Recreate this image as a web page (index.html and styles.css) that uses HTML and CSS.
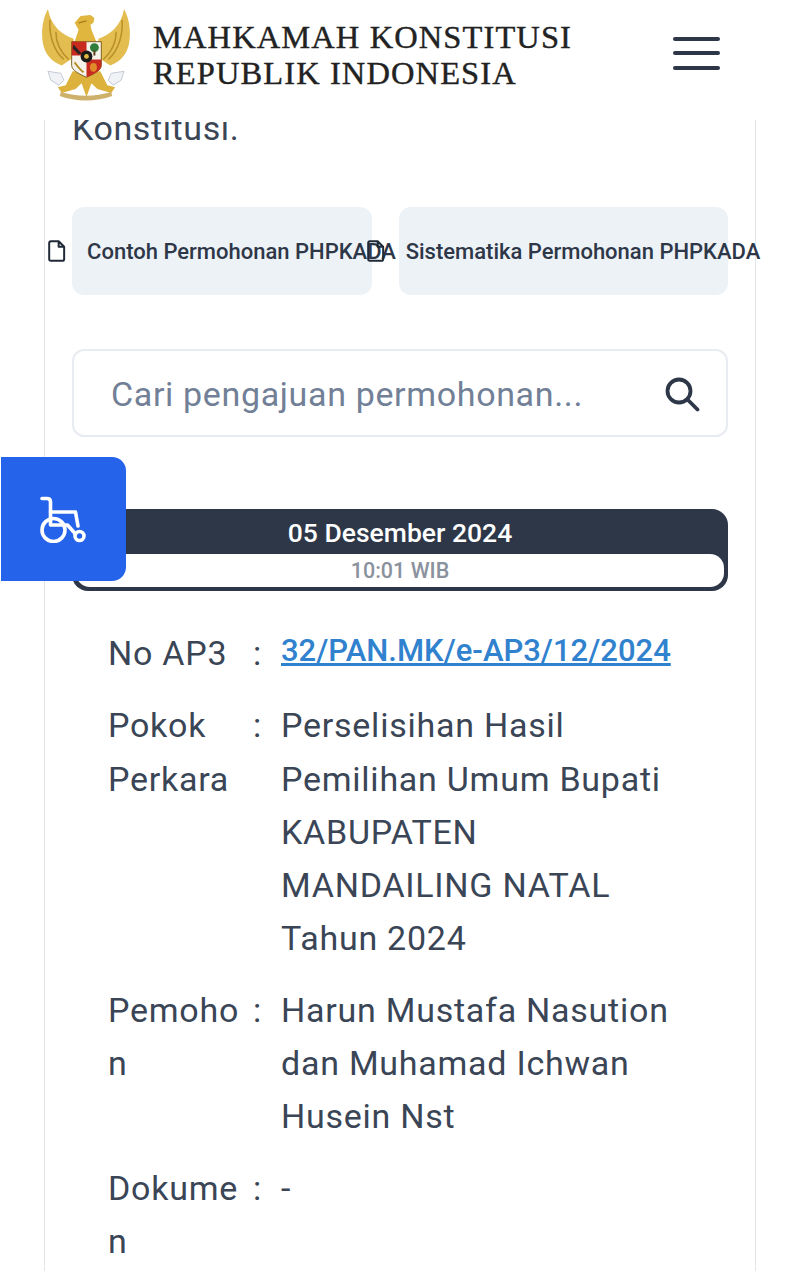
FILE: index.html
```html
<!DOCTYPE html>
<html lang="en">
<head>
  <meta charset="UTF-8" />
  <meta name="viewport" content="width=device-width, initial-scale=1" />
  <title>Mahkamah Konstitusi</title>
  <link rel="stylesheet" href="styles.css">
</head>
<body>

<header class="header">
  <div class="brand">
    <svg class="garuda" viewBox="0 0 90 96" aria-hidden="true">
      <!-- wings -->
      <path d="M6 1C0 12-1 26 1 36c2 10 8 18 19 22l12-8V31C20 27 9 18 6 1z" fill="#e3bd50"/>
      <path d="M83 1c6 11 7 25 5 35-2 10-8 18-19 22l-12-8V31c12-4 23-13 26-30z" fill="#e3bd50"/>
      <path d="M8 12c-1 14 3 30 14 40M14 24c0 10 4 20 13 28M81 12c1 14-3 30-14 40M75 24c0 10-4 20-13 28" fill="none" stroke="#b98f26" stroke-width="1.500"/>
      <!-- head and neck -->
      <path d="M33 15l6-7 10-1 4 3-1 5-3 2 1 5 5 12H33l4-12z" fill="#e0b63f"/>
      <path d="M37 15l8-2" stroke="#a57c1c" stroke-width="1.500"/>
      <!-- legs and tail -->
      <path d="M31 64l-7 14-8 2 4 6 14-4 6-6 5 14 5-14 6 6 14 4 4-6-8-2-7-14z" fill="#dcb23d"/>
      <!-- claws, white ribbons -->
      <path d="M19 66L6 64l3 9 8 5 5-5zM70 66l13-2-3 9-8 5-5-5z" fill="#f1f2f5" stroke="#c3c9d4"/>
      <!-- banner -->
      <path d="M19 85c16 5 35 5 51 0l1 4c-16 6-37 6-53 0z" fill="#cdb06a"/>
      <!-- shield -->
      <path d="M30 34h30v24c0 5-8 9-15 12-7-3-15-7-15-12z" fill="#f5f2ec" stroke="#7d601a"/>
      <path d="M30 34h15v14H30z" fill="#c92a20"/>
      <path d="M45 52h15v6c0 5-8 9-15 12z" fill="#c92a20"/>
      <circle cx="53" cy="40" r="4.500" fill="#2f7d3b"/>
      <rect x="52" y="43" width="2" height="5" fill="#5a3d1c"/>
      <path d="M32 37l8 9-3 1-6-6z" fill="#2a2320"/>
      <circle cx="45" cy="49" r="6" fill="#1b1a18"/>
      <circle cx="45" cy="49" r="2.400" fill="#e2b93f"/>
      <path d="M33 55c3 4 5 7 9 10" fill="none" stroke="#b58a22" stroke-width="2"/>
      <ellipse cx="52" cy="60" rx="3.500" ry="4.500" fill="#e08a2a"/>
    </svg>
    <div class="brand-name">MAHKAMAH KONSTITUSI<br>REPUBLIK INDONESIA</div>
  </div>
  <button class="burger" aria-label="Menu"><span></span><span></span><span></span></button>
</header>

<main class="panel">
  <p class="lead">Konstitusi.</p>

  <div class="doc-buttons">
    <a class="doc-btn doc-btn-a">
      <svg class="doc-icon" viewBox="0 0 16 20"><path d="M2.500 1.200h7l5 5v11a1.700 1.700 0 0 1-1.700 1.700H2.500A1.700 1.700 0 0 1 .9 17.200V2.900a1.700 1.700 0 0 1 1.600-1.700zM9.500 1.200v5h5"/></svg>
      Contoh Permohonan PHPKADA
    </a>
    <a class="doc-btn doc-btn-b">
      <svg class="doc-icon" viewBox="0 0 16 20"><path d="M2.500 1.200h7l5 5v11a1.700 1.700 0 0 1-1.700 1.700H2.500A1.700 1.700 0 0 1 .9 17.200V2.900a1.700 1.700 0 0 1 1.600-1.700zM9.500 1.200v5h5"/></svg>
      Sistematika Permohonan PHPKADA
    </a>
  </div>

  <div class="search">
    <span class="search-text">Cari pengajuan permohonan...</span>
    <svg class="search-icon" viewBox="0 0 36 36"><circle cx="15" cy="15" r="11.500"/><path d="M23.500 23.500L33.500 33.500"/></svg>
  </div>

  <div class="date-card">
    <div class="date-title">05 Desember 2024</div>
    <div class="date-time">10:01 WIB</div>
  </div>

  <div class="info">
    <div class="info-label">No AP3</div><div class="info-sep">:</div>
    <div class="info-value"><a class="info-link">32/PAN.MK/e-AP3/12/2024</a></div>

    <div class="info-label">Pokok Perkara</div><div class="info-sep">:</div>
    <div class="info-value">Perselisihan Hasil Pemilihan Umum Bupati KABUPATEN MANDAILING NATAL Tahun 2024</div>

    <div class="info-label">Pemohon</div><div class="info-sep">:</div>
    <div class="info-value">Harun Mustafa Nasution dan Muhamad Ichwan Husein Nst</div>

    <div class="info-label">Dokumen</div><div class="info-sep">:</div>
    <div class="info-value">-</div>
  </div>
</main>

<button class="a11y" aria-label="Aksesibilitas">
  <svg viewBox="0 0 48 48"><path d="M2 3.500h5c2.500 0 3.500 1.500 3.500 3.500v23h17l8 9"/><path d="M10.500 17h25l2.500 14"/><circle cx="13.500" cy="35" r="11.500"/><circle cx="39.500" cy="41" r="4.500"/></svg>
</button>

</body>
</html>
```

FILE: styles.css
```css
body {
  margin: 0;
  height: 1271px;
  overflow: hidden;
  background: white;
  color: #2d3748;
  font-family: Roboto, sans-serif;
  position: relative;
}
.header {
  position: relative;
  z-index: 2;
  height: 120px;
  display: flex;
  align-items: center;
  justify-content: space-between;
  padding: 0 80px 10px 42px;
  box-sizing: border-box;
  background: white;
}
.brand {
  display: flex;
  align-items: center;
  gap: 22px;
}
.garuda {
  width: 89px;
  height: 95px;
  filter: blur(0.6px);
}
.brand-name {
  font-family: 'Liberation Serif', serif;
  font-size: 32.500px;
  line-height: 36px;
  letter-spacing: 1.100px;
  color: #222;
  -webkit-text-stroke: 0.4px #222;
}
.burger {
  display: flex;
  flex-direction: column;
  gap: 10.500px;
  width: 47px;
  padding: 0;
  margin-bottom: 4px;
  border: none;
  background: none;
}
.burger span {
  height: 4px;
  background: #2d3748;
  border-radius: 2px;
}
.panel {
  display: flow-root;
  margin: 0 44px;
  height: 1151px;
  box-sizing: border-box;
  padding: 0 27px;
  border-left: 1px solid #e2e5ea;
  border-right: 1px solid #e2e5ea;
}
.lead {
  margin: -16px 0 0;
  font-size: 34px;
  letter-spacing: 0.600px;
  line-height: 48px;
  color: #3a4556;
}
.doc-buttons {
  display: flex;
  gap: 27px;
  margin-top: 55px;
}
.doc-btn {
  height: 88px;
  display: flex;
  align-items: center;
  justify-content: center;
  gap: 21px;
  background: #edf2f7;
  border-radius: 12px;
  font-size: 22px;
  font-weight: 500;
  white-space: nowrap;
}
.doc-btn-a {
  width: 300px;
}
.doc-btn-b {
  width: 329px;
}
.doc-icon {
  width: 18px;
  height: 22px;
  flex: none;
  fill: none;
  stroke: #1f2937;
  stroke-width: 1.800;
  stroke-linejoin: round;
}
.search {
  margin-top: 54px;
  height: 88px;
  display: flex;
  align-items: center;
  justify-content: space-between;
  padding: 1px 26px 0 37px;
  border: 2px solid #e8ecf1;
  border-radius: 12px;
  box-sizing: border-box;
}
.search-text {
  font-size: 34px;
  letter-spacing: 0.650px;
  color: #718096;
}
.search-icon {
  width: 36px;
  height: 36px;
  fill: none;
  stroke: #2d3748;
  stroke-width: 3.800;
  stroke-linecap: round;
}
.date-card {
  margin-top: 72px;
  height: 82px;
  box-sizing: border-box;
  background: #2d3748;
  border-radius: 16px;
  padding: 0 4px 4px;
  text-align: center;
}
.date-title {
  height: 45px;
  line-height: 48px;
  color: white;
  font-weight: 500;
  font-size: 26.500px;
}
.date-time {
  height: 33px;
  line-height: 33px;
  background: white;
  border-radius: 14px;
  color: #8a929e;
  font-weight: 500;
  font-size: 21.500px;
}
.info {
  display: grid;
  grid-template-columns: 135px 38px 1fr;
  row-gap: 18px;
  margin: 36px 51px 0 36px;
  font-size: 34px;
  letter-spacing: 0.750px;
  line-height: 53.300px;
  color: #3a4556;
}
.info-label {
  overflow-wrap: anywhere;
}
.info-sep {
  padding-left: 10px;
}
.info-link {
  position: relative;
  top: -4px;
  color: #3182ce;
  font-weight: 500;
  font-size: 31px;
  letter-spacing: 0;
  text-decoration: underline;
  white-space: nowrap;
}
.a11y {
  position: absolute;
  left: 1px;
  top: 457px;
  width: 125px;
  height: 124px;
  padding: 0;
  border: none;
  background: #2563eb;
  border-radius: 0 14px 14px 0;
  display: flex;
  align-items: center;
  justify-content: center;
}
.a11y svg {
  width: 48px;
  height: 48px;
  fill: none;
  stroke: white;
  stroke-width: 3.600;
  stroke-linecap: round;
  stroke-linejoin: round;
}
```
